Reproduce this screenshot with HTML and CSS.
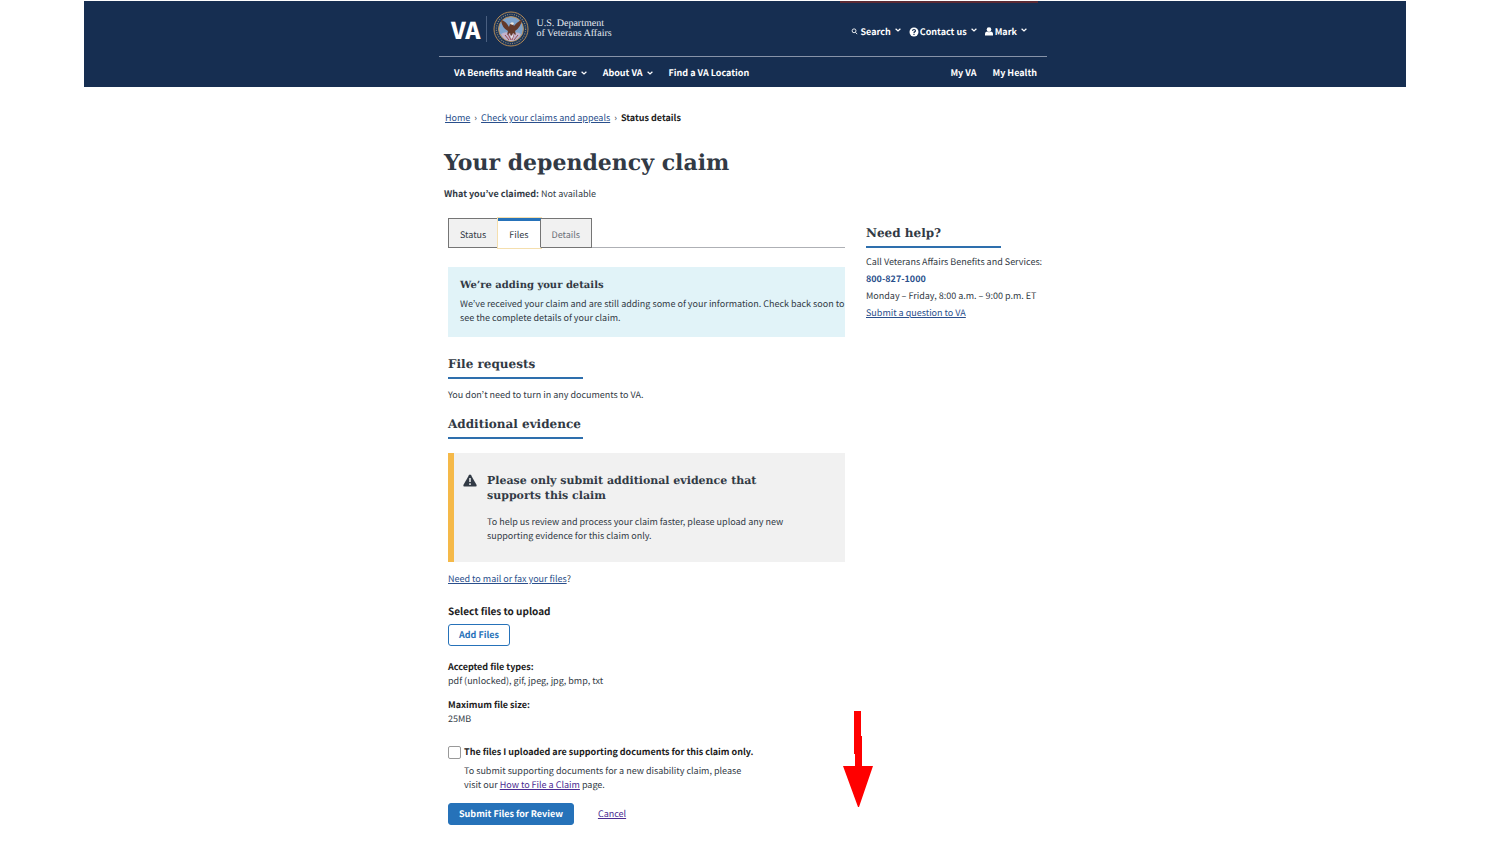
FILE: index.html
```html
<!DOCTYPE html>
<html lang="en">
<head>
<meta charset="utf-8">
<title>Your dependency claim</title>
<link rel="stylesheet" href="styles.css">
</head>
<body>
<div class="page">
  <header class="header">
    <div class="container header-inner">
      <div class="promo"></div>
      <div class="header-top">
        <div class="brand">
          <span class="brand-va">VA</span>
          <svg class="seal" viewBox="0 0 36 36" aria-hidden="true">
            <circle cx="18" cy="18" r="17" fill="#1b3559" stroke="#b58a55" stroke-width="1"/>
            <circle cx="18" cy="18" r="14.6" fill="none" stroke="#8d8474" stroke-width="1.2" stroke-dasharray="1 1.3"/>
            <circle cx="18" cy="18" r="12.4" fill="#7fa3cb" stroke="#c09255" stroke-width="1"/>
            <path d="M8 23 Q12 20 18 22 Q24 20 28 23 Q25 30 18 30 Q11 30 8 23Z" fill="#c3b3cb"/>
            <path d="M12 24l4 5M15 23l3 6M21 23l-2 6M25 24l-4 5" stroke="#934b50" stroke-width="1"/>
            <path d="M8 9 Q9 17 15 20 L14 24 L17 22 L18 26 L20 22 L23 24 L22 20 Q28 16 29 9 Q25 10 21 15 L19 12 L17 13 L16 16 Q13 10 8 9Z" fill="#63392a"/>
            <path d="M17 13 Q18 10 21 12 L20 14Z" fill="#eee6dc"/>
            <path d="M16 23l2 2 3-2-2 5z" fill="#e3dfe8"/>
          </svg>
          <span class="brand-name">U.S. Department<br>of Veterans Affairs</span>
        </div>
        <div class="tools">
          <button class="nav-button" type="button"><svg class="icon-search" viewBox="0 0 8 8"><circle cx="3.5" cy="3.2" r="2.2"/><path d="M5.1 4.9L7 7"/></svg>Search<svg class="chevron chevron-high" viewBox="0 0 6 4"><path d="M.6.7L3 3 5.4.7"/></svg></button>
          <button class="nav-button" type="button"><svg class="icon-help" viewBox="0 0 10 10"><circle cx="5" cy="5" r="4.5" fill="#fff"/><path d="M3.5 3.9Q3.6 2.5 5 2.5T6.5 3.8Q6.5 4.5 5.6 4.9 5 5.2 5 5.9M5 6.7V7.9" fill="none" stroke="#162e51" stroke-width="1.2"/></svg>Contact us<svg class="chevron chevron-high" viewBox="0 0 6 4"><path d="M.6.7L3 3 5.4.7"/></svg></button>
          <button class="nav-button" type="button"><svg class="icon-user" viewBox="0 0 8 9"><circle cx="4" cy="2.6" r="2.3"/><path d="M0 8.6V6.8Q0 4.8 2 4.6Q4 6 6 4.6Q8 4.8 8 6.8V8.6Z"/></svg>Mark<svg class="chevron chevron-high" viewBox="0 0 6 4"><path d="M.6.7L3 3 5.4.7"/></svg></button>
        </div>
      </div>
      <nav class="nav">
        <button class="nav-button" type="button">VA Benefits and Health Care<svg class="chevron" viewBox="0 0 6 4"><path d="M.6.7L3 3 5.4.7"/></svg></button>
        <button class="nav-button" type="button">About VA<svg class="chevron" viewBox="0 0 6 4"><path d="M.6.7L3 3 5.4.7"/></svg></button>
        <a class="nav-link" href="#">Find a VA Location</a>
        <a class="nav-link nav-end" href="#">My VA</a>
        <a class="nav-link" href="#">My Health</a>
      </nav>
    </div>
  </header>

  <div class="container body">
    <nav class="breadcrumb">
      <a href="#">Home</a><span class="sep">›</span><a href="#">Check your claims and appeals</a><span class="sep">›</span><strong>Status details</strong>
    </nav>
    <h1 class="title">Your dependency claim</h1>
    <p class="claimed"><strong>What you’ve claimed:</strong> Not available</p>

    <div class="columns">
      <main class="main">
        <div class="tabs" role="tablist">
          <button class="tab" type="button" role="tab">Status</button>
          <button class="tab tab-active" type="button" role="tab" aria-selected="true">Files</button>
          <button class="tab tab-muted" type="button" role="tab">Details</button>
        </div>

        <section class="info">
          <h2 class="info-title">We’re adding your details</h2>
          <p>We’ve received your claim and are still adding some of your information. Check back soon to see the complete details of your claim.</p>
        </section>

        <h2 class="heading">File requests</h2>
        <p class="requests">You don’t need to turn in any documents to VA.</p>
        <h2 class="heading heading-evidence">Additional evidence</h2>

        <section class="warning">
          <svg class="icon-warning" viewBox="0 0 14 13"><path d="M7 .5Q7.7.5 8.1 1.2L13.6 11Q14 12.5 12.6 12.5H1.4Q0 12.5.4 11L5.9 1.2Q6.3.5 7 .5Z" fill="#323a45"/><path d="M7 4V8M7 9.2V11" stroke="#f1f1f1" stroke-width="1.5"/></svg>
          <div class="warning-text">
            <h3 class="warning-title">Please only submit additional evidence that supports this claim</h3>
            <p>To help us review and process your claim faster, please upload any new supporting evidence for this claim only.</p>
          </div>
        </section>

        <p class="mail"><a href="#">Need to mail or fax your files</a>?</p>

        <form class="upload">
          <h3 class="upload-title">Select files to upload</h3>
          <button class="button button-outline" type="button">Add Files</button>
          <dl class="limits">
            <dt>Accepted file types:</dt>
            <dd>pdf (unlocked), gif, jpeg, jpg, bmp, txt</dd>
            <dt>Maximum file size:</dt>
            <dd>25MB</dd>
          </dl>
          <div class="confirm">
            <input class="checkbox" type="checkbox" id="confirm">
            <label for="confirm">The files I uploaded are supporting documents for this claim only.</label>
          </div>
          <p class="hint">To submit supporting documents for a new disability claim, please visit our <a class="visited" href="#">How to File a Claim</a> page.</p>
          <div class="actions">
            <button class="button" type="submit">Submit Files for Review</button>
            <a class="visited" href="#">Cancel</a>
          </div>
        </form>
      </main>

      <aside class="help">
        <h2 class="heading heading-help">Need help?</h2>
        <p>Call Veterans Affairs Benefits and Services:</p>
        <p><a class="phone" href="#">800-827-1000</a></p>
        <p>Monday – Friday, 8:00 a.m. – 9:00 p.m. ET</p>
        <p><a href="#">Submit a question to VA</a></p>
      </aside>
    </div>

    <svg class="arrow" viewBox="0 0 30 96" aria-hidden="true"><path d="M11 0H18V25H19V55H30L16 96H15L0 55H12V43H11Z" fill="#f00"/></svg>
  </div>
</div>
</body>
</html>
```

FILE: styles.css
```css
* { box-sizing: border-box; }

body {
  margin: 0;
  background: #fff;
  color: #323a45;
  font-family: "Noto Sans CJK JP", "Noto Sans", sans-serif;
  font-size: 9px;
  line-height: 14px;
  text-rendering: geometricPrecision;
}

h1, h2, h3, p, dl, dd { margin: 0; }

a { color: #2a4f8c; text-decoration: underline; }
.visited { color: #4c2c92; }

button {
  font: inherit;
  text-rendering: inherit;
  cursor: pointer;
}

.page { padding: 1px 94px 16px 84px; }

.container {
  position: relative;
  max-width: 612px;
  margin: 0 auto;
  padding-right: 4px;
}

/* Header */
.header { background: #162e51; color: #fff; }

.promo {
  position: absolute;
  top: 0;
  right: 13px;
  width: 198px;
  height: 2px;
  background: #5c2a33;
}

.header-top {
  display: flex;
  align-items: center;
  justify-content: space-between;
  height: 56px;
  padding: 0 20px 0 12px;
  border-bottom: 1px solid #8793a8;
}

.brand { display: flex; align-items: center; padding-top: 1px; }

.brand-va {
  padding-right: 6px;
  border-right: 1px solid #4a5f80;
  font-weight: 900;
  font-size: 23px;
  line-height: 26px;
}

.seal { width: 36px; height: 36px; margin: 0 7px 0 6px; }

.brand-name {
  color: #e8ecf2;
  font-family: "Liberation Serif", serif;
  font-size: 10px;
  line-height: 10px;
}

.tools { display: flex; align-items: center; gap: 8px; padding-top: 6px; }

.nav-button {
  display: flex;
  align-items: center;
  padding: 0;
  border: 0;
  background: none;
  color: #fff;
  font-weight: 700;
}

.nav-link { color: #fff; font-weight: 700; text-decoration: none; }

.chevron {
  width: 6px;
  height: 4px;
  margin-left: 4px;
  fill: none;
  stroke: #fff;
  stroke-width: 1.2;
}

.chevron-high { margin-bottom: 3px; }

.icon-search { width: 7px; height: 7px; margin-right: 2px; fill: none; stroke: #fff; stroke-width: 1; }
.icon-help { width: 10px; height: 10px; margin-right: 1px; }
.icon-user { width: 8px; height: 9px; margin-right: 2px; fill: #fff; }

.nav {
  display: flex;
  align-items: center;
  gap: 16px;
  height: 30px;
  padding: 2px 10px 0 15px;
}

.nav-end { margin-left: auto; }

/* Page heading */
.body { padding-top: 24px; padding-left: 5px; }

.breadcrumb { padding-left: 1px; }
.breadcrumb strong { color: #212121; }
.sep { margin: 0 4px; }

.title {
  margin-top: 21px;
  font-family: "DejaVu Serif", serif;
  font-size: 22px;
  line-height: 34px;
}

.claimed { margin-top: 7px; }

.columns {
  display: grid;
  grid-template-columns: minmax(0, 397px) minmax(0, 181px);
  gap: 21px;
  margin-top: 17px;
  padding-left: 4px;
}

/* Tabs */
.tabs {
  display: flex;
  height: 30px;
  border-bottom: 1px solid #aeb0b5;
}

.tab {
  height: 30px;
  padding: 3px 11px 0;
  border: 1px solid #757575;
  background: #f1f1f1;
  color: #323a45;
}

.tab + .tab { border-left: 0; }

.tab-active {
  padding-top: 1px;
  border-top: 3px solid #2672b9;
  border-bottom-color: #fff;
  background: #fff;
  outline: 1px solid #f5dfae;
}

.tab-muted { color: #6b7078; }

/* Notices and headings */
.info {
  margin-top: 19px;
  padding: 12px 0 12px 12px;
  background: #e1f3f8;
}

.info-title, .heading, .warning-title {
  font-family: "DejaVu Serif", serif;
}

.info-title {
  margin-bottom: 4px;
  font-size: 10px;
  line-height: 14px;
}

.heading {
  width: 135px;
  margin-top: 17px;
  padding-bottom: 3px;
  border-bottom: 2px solid #2e6fad;
  font-size: 12px;
  line-height: 20px;
  white-space: nowrap;
}

.requests { margin-top: 9px; }
.heading-evidence { margin-top: 12px; }

.warning {
  display: flex;
  gap: 10px;
  margin-top: 14px;
  padding: 20px 20px 19px 9px;
  border-left: 6px solid #f5b949;
  background: #f1f1f1;
}

.icon-warning { flex: none; width: 14px; height: 13px; margin-top: 1px; }
.warning-text { max-width: 300px; }

.warning-title {
  margin-bottom: 12px;
  font-size: 11px;
  line-height: 15px;
}

.mail { margin-top: 10px; }

/* Upload form */
.upload-title { margin-top: 18px; color: #212121; font-size: 10px; line-height: 14px; }

.button {
  height: 22px;
  padding: 0 10px;
  border: 1px solid #2672b9;
  border-radius: 3px;
  background: #2672b9;
  color: #fff;
  font-weight: 700;
}

.button-outline {
  display: block;
  margin-top: 6px;
  background: #fff;
  color: #2672b9;
}

.limits { margin-top: 14px; }
.limits dt { color: #212121; font-weight: 700; }
.limits dd + dt { margin-top: 10px; }

.confirm {
  display: flex;
  align-items: center;
  gap: 3px;
  margin-top: 19px;
  color: #212121;
  font-weight: 700;
}

.checkbox {
  appearance: none;
  width: 13px;
  height: 13px;
  margin: 0;
  border: 1px solid #999;
  border-radius: 2px;
  background: #fff;
}

.hint { max-width: 300px; margin-top: 5px; padding-left: 16px; }
.actions { display: flex; align-items: center; gap: 24px; margin-top: 11px; }

/* Sidebar */
.help { line-height: 17px; white-space: nowrap; }
.heading-help { margin: 5px 0; }
.phone { font-weight: 700; text-decoration: none; }

/* Callout arrow */
.arrow {
  position: absolute;
  top: 624px;
  left: 404px;
  width: 30px;
  height: 96px;
}
```
